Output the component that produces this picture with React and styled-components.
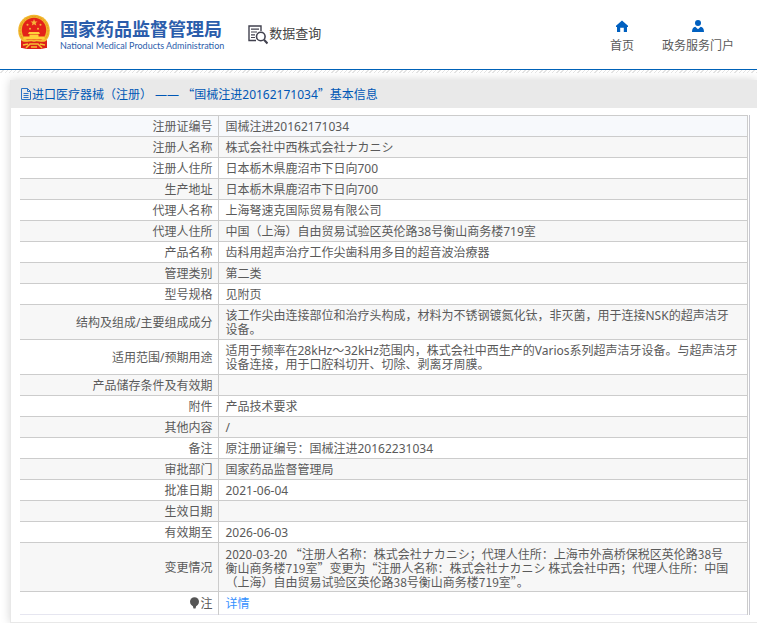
import React from "react";
import styled, { createGlobalStyle } from "styled-components";

const CJK = '"Noto Sans CJK SC", sans-serif';

const GlobalStyle = createGlobalStyle`
  * { box-sizing: border-box; }
  body {
    margin: 0;
    background: #fff;
    color: #5a5a5a;
    font: 12px/14px "Noto Sans", ${CJK};
    overflow-x: hidden;
  }
  a { color: inherit; text-decoration: none; }
`;

const Header = styled.header`
  display: flex;
  align-items: flex-start;
  height: 70px;
  padding: 14px 23px 0 16px;
  border-bottom: 1px solid #0062b8;
`;

const Hatch = styled.div`
  height: 3px;
  background: repeating-linear-gradient(135deg, #fff 0 2px, #e4e4e4 2px 3px);
`;

const Brand = styled.a`
  display: flex;
  gap: 8px;
  color: #2b5dab;
`;

const BrandText = styled.span`
  display: flex;
  flex-direction: column;
  padding-top: 3px;
`;

const BrandName = styled.span`
  font: 700 18px/22px ${CJK};
`;

const BrandEnglish = styled.span`
  font: 400 9px/14px Lato, sans-serif;
`;

const Section = styled.a`
  display: flex;
  gap: 1px;
  margin: 8px 0 0 24px;
  color: #444;
  font: 400 13px/22px ${CJK};
  svg { margin-top: 3px; }
`;

const Nav = styled.nav`
  display: flex;
  gap: 28px;
  margin-left: auto;
  padding-top: 6px;
`;

const NavLink = styled.a`
  display: flex;
  flex-direction: column;
  align-items: center;
  gap: 7px;
  svg { fill: #0060c0; }
`;

const Panel = styled.main`
  margin: 7px 0 0 10px;
  border: 1px solid #e8e8e8;
  border-width: 0 0 1px 1px;
  box-shadow: 0 0 9px rgba(0, 0, 0, 0.17);
`;

const PanelTitle = styled.h1`
  display: flex;
  align-items: center;
  height: 28px;
  margin: 0;
  padding: 0 9px;
  background: #e9e9e9;
  color: #0057b5;
  font-size: 12px;
  font-weight: 400;
`;

const TableFrame = styled.div`
  margin: 7px 7px 7px 9px;
  padding-right: 1px;
  border-right: 1px solid #c8c8d0;
`;

const Table = styled.table`
  width: 100%;
  border-collapse: collapse;
  table-layout: fixed;
`;

const Row = styled.tr`
  height: ${(p) => (p.$last ? 23 : 21)}px;
  background: ${(p) => (p.$first ? "#f7f9fc" : p.$shaded ? "#f7f7f7" : "#fff")};
  border-top: 1px solid #ccc;
  border-bottom: 1px solid ${(p) => (p.$last ? "#e6e6f0" : "#ccc")};
`;

const Label = styled.th`
  width: 198px;
  padding: 4px 5px 2px;
  border-right: 1px solid #ccc;
  font-weight: 400;
  text-align: right;
`;

const Value = styled.td`
  padding: 4px 8px 2px 7px;
  border-right: 1px solid #ccc;
  font-family: ${(p) => (p.$wideQuotes ? CJK : "inherit")};
  white-space: pre-line;
`;

const WideQuote = styled.span`
  font-family: ${CJK};
`;

const DetailLink = styled.a`
  color: #3390ff;
`;

const NoteMark = styled.svg`
  vertical-align: -1px;
`;

function Emblem() {
  return (
    <svg width="36" height="36" viewBox="0 0 36 36" aria-hidden="true">
      <path d="M6 24 6 34l5 1h14l5-1V24z" fill="#d91f1b" />
      <circle cx="18" cy="16.5" r="15.8" fill="#f2b62c" />
      <circle cx="18" cy="16.5" r="14" fill="none" stroke="#e09a1c" strokeWidth="1" strokeDasharray="2 1" />
      <circle cx="18" cy="16" r="12.2" fill="#e32219" />
      <path d="m18 5 1 2.4 2.6.1-2 1.6.7 2.5-2.3-1.4-2.2 1.4.7-2.5-2-1.6 2.6-.1z" fill="#f6b53a" />
      <g fill="#f6b53a">
        <circle cx="11.5" cy="10.8" r="1" />
        <circle cx="24.5" cy="10.8" r="1" />
        <circle cx="14" cy="14.8" r="1" />
        <circle cx="22" cy="14.8" r="1" />
      </g>
      <path d="M13 18h10l1 2H12zM13.5 20.5h9v2h-9zM8 22.5h20l1 3H7z" fill="#ffd13a" />
      <path d="M5 26c5 3 9-1 13 1 4-2 8 2 13-1v8H5z" fill="#dd201a" />
      <path d="M6 26c5 3 8-1 12 1 4-2 7 2 12-1M10 34l4-4h8l4 4M7 31l5-1M29 31l-5-1M15 33h6" fill="none" stroke="#f6c033" strokeWidth="1.5" />
    </svg>
  );
}

function SearchDocIcon() {
  return (
    <svg width="20" height="20" viewBox="0 0 20 20" fill="none" stroke="#42424f" aria-hidden="true">
      <path d="M8 15.5H1V1h12v5" strokeWidth="1.4" />
      <path d="M3 4.2h8M3 7h6M3 9.8h4M3 12.5h4" strokeWidth="1.2" />
      <circle cx="12.8" cy="11.5" r="4.3" strokeWidth="1.6" />
      <path d="m16 14.8 3.5 3.7" strokeWidth="2.2" />
    </svg>
  );
}

function HomeIcon() {
  return (
    <svg width="12" height="12" viewBox="0 0 12 12" aria-hidden="true">
      <path d="M6 .6 0 5.8V7h1v5h3.2V7.7h3.6V12H11V7h1V5.8z" />
    </svg>
  );
}

function UserIcon() {
  return (
    <svg width="12" height="12" viewBox="0 0 12 12" aria-hidden="true">
      <circle cx="6" cy="3" r="3" />
      <path d="M0 12c0-3.3 1.3-5 3.3-5.2L6 9.3l2.7-2.5C10.7 7 12 8.7 12 12z" />
    </svg>
  );
}

function DocIcon() {
  return (
    <svg width="12" height="12" viewBox="0 0 12 12" fill="none" stroke="#2a72c4" strokeWidth="1" aria-hidden="true">
      <path d="M1.5.5h6l3 3v8h-9zM7.5.5v3h3M3.5 5.5h5M3.5 7.5h5M3.5 9.5h5" />
    </svg>
  );
}

const rows = [
  ["注册证编号", "国械注进20162171034"],
  ["注册人名称", "株式会社中西株式会社ナカニシ"],
  ["注册人住所", "日本栃木県鹿沼市下日向700"],
  ["生产地址", "日本栃木県鹿沼市下日向700"],
  ["代理人名称", "上海弩速克国际贸易有限公司"],
  ["代理人住所", "中国（上海）自由贸易试验区英伦路38号衡山商务楼719室"],
  ["产品名称", "齿科用超声治疗工作尖歯科用多目的超音波治療器"],
  ["管理类别", "第二类"],
  ["型号规格", "见附页"],
  ["结构及组成/主要组成成分", "该工作尖由连接部位和治疗头构成，材料为不锈钢镀氮化钛，非灭菌，用于连接NSK的超声洁牙设备。"],
  ["适用范围/预期用途", "适用于频率在28kHz～32kHz范围内，株式会社中西生产的Varios系列超声洁牙设备。与超声洁牙设备连接，用于口腔科切开、切除、剥离牙周膜。"],
  ["产品储存条件及有效期", ""],
  ["附件", "产品技术要求"],
  ["其他内容", "/"],
  ["备注", "原注册证编号：国械注进20162231034"],
  ["审批部门", "国家药品监督管理局"],
  ["批准日期", "2021-06-04"],
  ["生效日期", ""],
  ["有效期至", "2026-06-03"],
  ["变更情况", "2020-03-20 “注册人名称：株式会社ナカニシ；代理人住所：上海市外高桥保税区英伦路38号\n衡山商务楼719室”变更为“注册人名称：株式会社ナカニシ 株式会社中西；代理人住所：中国\n（上海）自由贸易试验区英伦路38号衡山商务楼719室”。"],
];

export default function App() {
  return (
    <div lang="zh-CN">
      <GlobalStyle />
      <Header>
        <Brand href="#">
          <Emblem />
          <BrandText>
            <BrandName>国家药品监督管理局</BrandName>
            <BrandEnglish>National Medical Products Administration</BrandEnglish>
          </BrandText>
        </Brand>
        <Section href="#search">
          <SearchDocIcon />
          数据查询
        </Section>
        <Nav>
          <NavLink href="#home">
            <HomeIcon />
            首页
          </NavLink>
          <NavLink href="#portal">
            <UserIcon />
            政务服务门户
          </NavLink>
        </Nav>
      </Header>
      <Hatch />
      <Panel>
        <PanelTitle>
          <DocIcon />
          <span>
            进口医疗器械（注册） —— <WideQuote>“</WideQuote>国械注进20162171034<WideQuote>”</WideQuote>基本信息
          </span>
        </PanelTitle>
        <TableFrame>
          <Table>
            <tbody>
              {rows.map(([label, value], i) => (
                <Row key={label} $first={i === 0} $shaded={i % 2 === 1}>
                  <Label scope="row">{label}</Label>
                  <Value $wideQuotes={value.includes("“")}>{value}</Value>
                </Row>
              ))}
              <Row $last>
                <Label scope="row">
                  <NoteMark width="11" height="12" viewBox="0 0 11 12" fill="#555" aria-hidden="true">
                    <circle cx="5.5" cy="4.7" r="4.5" />
                    <path d="M3.5 8h4l-1 3.5h-2z" />
                  </NoteMark>
                  注
                </Label>
                <Value>
                  <DetailLink href="#detail">详情</DetailLink>
                </Value>
              </Row>
            </tbody>
          </Table>
        </TableFrame>
      </Panel>
    </div>
  );
}
